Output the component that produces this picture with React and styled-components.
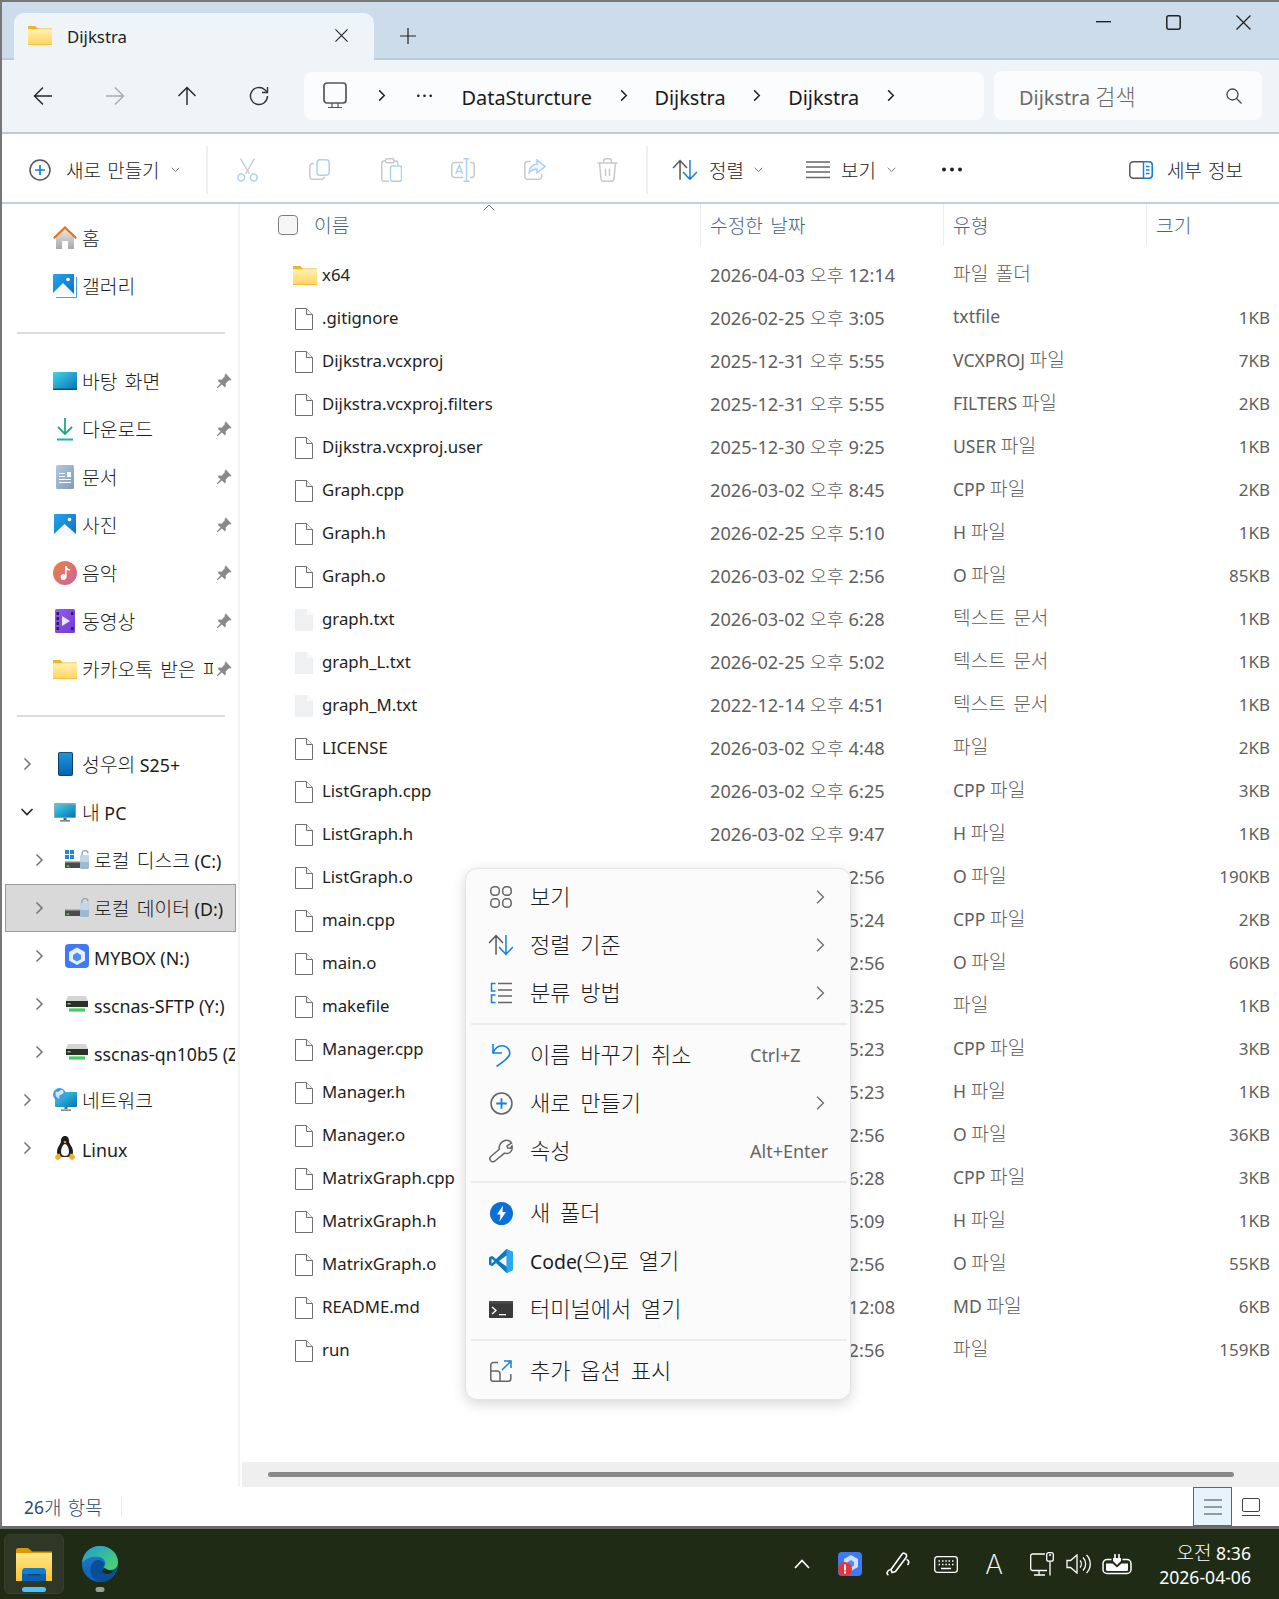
import React from "react"
import styled, { createGlobalStyle } from "styled-components"

const GlobalStyle = createGlobalStyle`
  html, body { margin: 0; padding: 0; background: #fff; }
  body {
    font-family: "Noto Sans", "Noto Sans CJK KR", sans-serif;
    color: #1c1c1c;
  }
  * { box-sizing: border-box; }
  svg { display: block; flex-shrink: 0; }
`

const Page = styled.div`
  position: relative;
  width: 1279px;
  height: 1599px;
  display: flex;
  flex-direction: column;
  overflow: hidden;
`

const Window = styled.div`
  flex: 1;
  min-height: 0;
  display: flex;
  flex-direction: column;
  border-top: 2px solid #777;
  border-left: 2px solid #777;
  border-bottom: 3px solid #6b6b6b;
  background: #fff;
`

const KoText = styled.span`
  font-family: "Noto Sans CJK KR", sans-serif;
  font-size: var(--ko-size, 19px);
  word-spacing: var(--ko-space, 2px);
  font-weight: 300;
`

// wraps hangul runs so they get their own size, latin is much smaller in the shot
function T({ children }) {
  const parts = String(children).split(/([\u3131-\uD7A3]+(?:\s+[\u3131-\uD7A3]+)*)/)
  return parts.map((p, i) =>
    /[\u3131-\uD7A3]/.test(p) ? <KoText key={i}>{p}</KoText> : p
  )
}

/* title bar */
const TabStrip = styled.div`
  height: 58px;
  flex-shrink: 0;
  display: flex;
  align-items: flex-end;
  padding-left: 12px;
  background: #ccdcea;
  border-bottom: 2px solid #bccbda;
`
const Tab = styled.div`
  width: 360px;
  height: 47px;
  margin-bottom: -2px;
  display: flex;
  align-items: center;
  padding: 0 26px 2px 14px;
  background: #eff4f9;
  border-radius: 10px 10px 0 0;
  font-size: 16.8px;
`
const TabLabel = styled.span`
  margin-left: 15px;
  padding-top: 2px;
  flex: 1;
`
const NewTab = styled.div`
  margin: 0 0 14px 26px;
`
const WindowControls = styled.div`
  margin-left: auto;
  margin-right: 1px;
  align-self: flex-start;
  display: flex;
`
const WindowButton = styled.div`
  width: 70px;
  height: 40px;
  display: flex;
  align-items: center;
  justify-content: center;
`

/* nav row */
const NavBar = styled.div`
  height: 74px;
  flex-shrink: 0;
  display: flex;
  align-items: center;
  padding: 0 0 1px 5px;
  background: #eff4f9;
  border-bottom: 2px solid #bccbda;
`
const NavButton = styled.div`
  width: 72px;
  display: flex;
  justify-content: center;
`
const AddressBox = styled.div`
  width: 680px;
  height: 48px;
  margin-left: 9px;
  display: flex;
  align-items: center;
  gap: 24.8px;
  padding-left: 19px;
  background: #fbfcfe;
  border-radius: 8px;
  font-size: 19.9px;
  color: #1a1a1a;
`
const AddressPart = styled.span`
  padding-top: 3px;
`
const AddressHome = styled.div`
  margin-right: 3.2px;
`
const Dots = styled.div`
  width: 24px;
  display: flex;
  justify-content: center;
`
const SearchBox = styled.div`
  width: 268px;
  height: 49px;
  margin-left: 10px;
  display: flex;
  align-items: center;
  justify-content: space-between;
  padding: 0 20px 0 25px;
  background: #fbfcfe;
  border-radius: 8px;
  font-size: 19.9px;
  color: #6b6b6b;
  --ko-size: 22px;
  --ko-space: 3px;
`
const SearchText = styled.span`
  padding-bottom: 2px;
`

/* command bar */
const CommandBar = styled.div`
  height: 70px;
  flex-shrink: 0;
  display: flex;
  align-items: center;
  padding: 3px 0 0 27px;
  background: #fff;
  border-bottom: 2px solid #c0cfdc;
  font-size: 17px;
  color: #222;
`
const CommandGroup = styled.div`
  width: ${(p) => p.$width}px;
  display: flex;
  align-items: center;
`
const CommandIcon = styled.div`
  width: 72px;
  display: flex;
  justify-content: center;
`
const CommandDivider = styled.div`
  width: 2px;
  height: 48px;
  background: #efefef;
  margin: ${(p) => p.$margin};
`
const Caret = styled.span`
  margin-left: ${(p) => p.$gap || 10}px;
`
const CommandLabel = styled.span`
  margin-left: ${(p) => p.$gap}px;
  white-space: nowrap;
`
const DetailsToggle = styled.div`
  margin-left: auto;
  padding-right: 36px;
  display: flex;
  align-items: center;
`

/* main area */
const Body = styled.div`
  flex: 1;
  min-height: 0;
  display: flex;
`
const Sidebar = styled.nav`
  width: 238px;
  flex-shrink: 0;
  padding-top: 10px;
  border-right: 2px solid #f3f3f3;
  overflow: hidden;
`
const NavItem = styled.div`
  height: 48px;
  margin: 0 2px 0 3px;
  display: flex;
  align-items: center;
  padding: 0 ${(p) => (p.$pin ? 3 : 0)}px 0 ${(p) => p.$level * 12 + 12}px;
  font-size: 17.8px;
  --ko-size: 19.3px;
  --ko-space: 3px;
  background: ${(p) => (p.$selected ? "#d9d9d9" : "transparent")};
  border: 1px solid ${(p) => (p.$selected ? "#9a9a9a" : "transparent")};
`
const Expander = styled.div`
  width: 18px;
  flex-shrink: 0;
  display: flex;
  justify-content: center;
  margin-right: 17px;
`
const NavIconSlot = styled.div`
  width: 24px;
  flex-shrink: 0;
  display: flex;
  justify-content: center;
`
const NavLabel = styled.span`
  flex: 1;
  min-width: 0;
  margin-left: 5px;
  padding-top: ${(p) => (p.$latin ? 4 : 0)}px;
  white-space: nowrap;
  overflow: hidden;
`
const Pin = styled.div`
  width: 16px;
  margin-left: 3px;
  flex-shrink: 0;
`
const SidebarRule = styled.div`
  height: 47px;
  display: flex;
  align-items: center;
  padding: 0 13px 2px 15px;
  &::after {
    content: "";
    flex: 1;
    height: 2px;
    background: #dcdcdc;
  }
`

const Content = styled.main`
  flex: 1;
  min-width: 0;
  display: flex;
  flex-direction: column;
`
const HeaderRow = styled.div`
  display: grid;
  grid-template-columns: 460px 243px 203px 1fr;
  height: 42px;
  margin-bottom: 8px;
  flex-shrink: 0;
  color: #4a6484;
  --ko-size: 19.2px;
  --ko-space: 3px;
`
const HeaderCell = styled.div`
  position: relative;
  display: flex;
  align-items: center;
  padding: 0 0 1px ${(p) => p.$pad}px;
  border-left: ${(p) => (p.$first ? "0" : "1px solid #e9edf1")};
`
const Checkbox = styled.div`
  width: 20px;
  height: 20px;
  margin: 1px 16px 0 0;
  background: #f6f6f6;
  border: 1px solid #7f7f7f;
  border-radius: 4px;
`
const SortCaret = styled.div`
  position: absolute;
  left: 243px;
  top: 0;
`
const Rows = styled.div`
  flex: 1;
  min-height: 0;
`
const FileRow = styled.div`
  display: grid;
  grid-template-columns: 460px 243px 203px 1fr;
  height: 43px;
  align-items: center;
  white-space: nowrap;
`
const NameCell = styled.div`
  display: flex;
  align-items: center;
  padding-left: 53px;
  font-size: 16.8px;
  color: #1e1e1e;
`
const FileName = styled.span`
  margin-top: -2px;
`
const FileIconSlot = styled.div`
  width: 29px;
  display: flex;
  padding-left: ${(p) => (p.$folder ? 0 : 2)}px;
`
const MetaCell = styled.div`
  padding: 0 0 ${(p) => p.$lift}px 10px;
  font-size: ${(p) => p.$size}px;
  color: #5f5f5f;
  --ko-size: ${(p) => p.$ko}px;
  --ko-space: 3px;
`
const SizeCell = styled.div`
  text-align: right;
  padding: 0 9px 2px 0;
  font-size: 17px;
  color: #5f5f5f;
`
const ScrollTrack = styled.div`
  height: 25px;
  flex-shrink: 0;
  margin-left: 2px;
  display: flex;
  align-items: center;
  padding: 0 45px 0 26px;
  background: #efefef;
`
const ScrollThumb = styled.div`
  flex: 1;
  height: 5px;
  border-radius: 3px;
  background: #888;
`
const StatusBar = styled.div`
  height: 39px;
  flex-shrink: 0;
  display: flex;
  align-items: center;
  padding-left: 22px;
  color: #2b4a6f;
  font-size: 17.4px;
`
const StatusDivider = styled.div`
  width: 1px;
  height: 21px;
  margin-left: 18px;
  background: #e9e9e9;
`
const ViewButton = styled.div`
  width: ${(p) => (p.$active ? 39 : 38)}px;
  height: 39px;
  display: flex;
  align-items: center;
  justify-content: center;
  background: ${(p) => (p.$active ? "#e5f3fb" : "transparent")};
  border: 1px solid ${(p) => (p.$active ? "#1878c8" : "transparent")};
`
const ViewButtons = styled.div`
  margin-left: auto;
  padding-right: 9px;
  display: flex;
`

/* context menu */
const Menu = styled.div`
  position: absolute;
  left: 465px;
  top: 868px;
  width: 386px;
  padding: 4px 0;
  background: #fbfbfb;
  border: 1px solid #e4e4e4;
  border-radius: 12px;
  box-shadow: 0 4px 14px rgba(0, 0, 0, 0.16);
  font-size: 19.4px;
  color: #1c1c1c;
  --ko-size: 22px;
  --ko-space: 5px;
`
const MenuItem = styled.div`
  height: 48px;
  display: flex;
  align-items: center;
  white-space: nowrap;
  padding-left: 19px;
`
const MenuIcon = styled.div`
  width: 32px;
  margin-right: 13px;
  display: flex;
  justify-content: center;
`
const MenuLabel = styled.span`
  padding-bottom: 4px;
`
const MenuChevron = styled.div`
  margin-left: auto;
  margin-right: 22px;
`
const Shortcut = styled.div`
  margin-left: auto;
  margin-right: 21px;
  width: 79px;
  font-size: 18px;
  color: #666;
`
const MenuRule = styled.div`
  height: 2px;
  margin: 6px 3px 6px 5px;
  background: #ececec;
`

/* taskbar */
const Taskbar = styled.footer`
  height: 70px;
  flex-shrink: 0;
  display: flex;
  padding-left: 4px;
  background: #202b16;
  color: #fff;
`
const TaskButton = styled.div`
  position: relative;
  width: 60px;
  height: 60px;
  margin: 5px 6px 0 0;
  display: flex;
  justify-content: center;
  padding-top: ${(p) => p.$top}px;
  border-radius: 6px;
  background: ${(p) => (p.$active ? "#2f3827" : "transparent")};
  border: 1px solid ${(p) => (p.$active ? "#363f2e" : "transparent")};
`
const TaskIndicator = styled.div`
  position: absolute;
  bottom: 1px;
  left: 50%;
  transform: translateX(-50%);
  width: ${(p) => (p.$active ? 24 : 9)}px;
  height: 5px;
  border-radius: 3px;
  background: ${(p) => (p.$active ? "#4cc2ff" : "#9a9e96")};
`
const Tray = styled.div`
  margin-left: auto;
  display: flex;
  align-items: center;
`
const TraySlot = styled.div`
  width: ${(p) => p.$width}px;
  padding-left: ${(p) => p.$nudge || 0}px;
  display: flex;
  justify-content: center;
`
const Clock = styled.div`
  margin: 0 28px 0 18px;
  width: 95px;
  text-align: right;
  font-size: 17.6px;
  line-height: 24px;
  --ko-size: 19px;
  white-space: nowrap;
`
const TrayLetter = styled.span`
  font-family: Inter, "Liberation Sans", sans-serif;
  font-size: 27px;
  font-weight: 200;
  line-height: 1;
`

/* ---------- drawings ---------- */
const Chevron = ({ size = 14, color = "#222", w = 1.6 }) => (
  <svg width={size} height={size} viewBox="0 0 14 14" fill="none" stroke={color} strokeWidth={w}>
    <path d="M4.5 1.5 10 7l-5.5 5.5" />
  </svg>
)
const ChevronDown = ({ color = "#222", w = 1.6 }) => (
  <svg width="16" height="16" viewBox="0 0 16 16" fill="none" stroke={color} strokeWidth={w}>
    <path d="M2.5 5 8 10.5 13.5 5" />
  </svg>
)
const SmallCaret = () => (
  <svg width="9" height="6" viewBox="0 0 9 6" fill="none" stroke="#777" strokeWidth="1">
    <path d="M.7.8 4.5 4.6 8.3.8" />
  </svg>
)
const Folder = ({ w = 24, h = 19 }) => (
  <svg width={w} height={h} viewBox="0 0 24 19">
    <defs>
      <linearGradient id="fg" x1="0" y1="0" x2="0" y2="1">
        <stop offset="0" stopColor="#fff2b0" />
        <stop offset="1" stopColor="#ffd35f" />
      </linearGradient>
    </defs>
    <path d="M0 1.2C0 .5.5 0 1.2 0h6l2.6 2.4H24v3H0z" fill="#f0b429" />
    <path d="M0 3.2h24V19H0z" fill="url(#fg)" />
    <path d="M0 18.4h24V19H0z" fill="#eeb32f" />
  </svg>
)
const FileIcon = () => (
  <svg width="18" height="22" viewBox="0 0 18 22" fill="#fff" stroke="#6f6f6f" strokeWidth="1">
    <path d="M.5.5h11L17.5 6.5v15H.5z" />
    <path d="M11.5.5v6h6" fill="#f3f3f3" />
  </svg>
)
const TextFileIcon = () => (
  <svg width="18" height="22" viewBox="0 0 18 22">
    <path d="M0 0h12l6 6v16H0z" fill="#eef0f2" />
    <path d="M12 0v6h6z" fill="#f9f9f9" />
  </svg>
)
const Pinned = () => (
  <svg width="16" height="16" viewBox="0 0 16 16" fill="#8a8a8a">
    <path d="M9.6.6 15.4 6.4 14 7.4l-1-.2-3.3 3.3.2 2.6-1.2 1.2-2.9-2.9-4.2 3.8-.8-.8 3.8-4.2L1.7 7.7l1.2-1.2 2.6.2 3.3-3.3-.2-1z" />
  </svg>
)
const Home = () => (
  <svg width="24" height="24" viewBox="0 0 24 24">
    <defs>
      <linearGradient id="hb" x1="0" y1="0" x2="0" y2="1">
        <stop offset="0" stopColor="#e6e6e6" />
        <stop offset="1" stopColor="#a9a9a9" />
      </linearGradient>
    </defs>
    <path d="M3 10 12 3l9 7v13h-6v-8H9v8H3z" fill="url(#hb)" />
    <path d="M0 11.5 12 0l12 11.5-1.5 1.5L12 3 1.5 13z" fill="#e8701a" />
  </svg>
)
const Gallery = () => (
  <svg width="24" height="24" viewBox="0 0 24 24">
    <defs>
      <linearGradient id="gb" x1="0" y1="0" x2="1" y2="1">
        <stop offset="0" stopColor="#26a5ea" />
        <stop offset="1" stopColor="#0b6fc4" />
      </linearGradient>
    </defs>
    <path d="M3 23h20V3h1v21H3z" fill="#4f9ed8" />
    <path d="M1 0h20v21H1a1 1 0 0 1-1-1V1a1 1 0 0 1 1-1z" fill="url(#gb)" />
    <path d="M0 19 10 9l11 11v1H0z" fill="#f4f8fc" />
    <circle cx="15" cy="5.5" r="1.8" fill="#fff" />
  </svg>
)
const Desktop = () => (
  <svg width="24" height="18" viewBox="0 0 24 18">
    <defs>
      <linearGradient id="db" x1="0" y1="0" x2="1" y2="1">
        <stop offset="0" stopColor="#3ed6e6" />
        <stop offset="1" stopColor="#0a6fb8" />
      </linearGradient>
    </defs>
    <rect width="24" height="18" rx="1" fill="url(#db)" />
    <rect y="16.6" width="24" height="1.4" fill="#0a4f86" />
  </svg>
)
const Download = () => (
  <svg width="18" height="24" viewBox="0 0 18 24" fill="none" stroke="#1ea982" strokeWidth="1.8">
    <path d="M9 1v16M2 10l7 7 7-7" />
    <path d="M1 22.5h16" stroke="#1db5a0" strokeWidth="2" />
  </svg>
)
const Documents = () => (
  <svg width="18" height="24" viewBox="0 0 18 24">
    <defs>
      <linearGradient id="dc" x1="0" y1="0" x2="1" y2="1">
        <stop offset="0" stopColor="#b6c8dc" />
        <stop offset="1" stopColor="#7c9cc0" />
      </linearGradient>
    </defs>
    <rect width="18" height="24" rx="1.5" fill="url(#dc)" />
    <path d="M3 8h6v1H3zM3 11h6v1H3zM3 14h12v1H3zM3 17h12v1H3z" fill="#fff" />
    <rect x="11" y="7" width="4" height="5" fill="#fff" />
  </svg>
)
const Pictures = () => (
  <svg width="22" height="22" viewBox="0 0 22 22">
    <rect width="22" height="22" rx="1" fill="url(#gb)" />
    <path d="M0 20 10.5 10 22 20v2H0z" fill="#f4f8fc" />
    <circle cx="15.5" cy="5.5" r="1.8" fill="#fff" />
  </svg>
)
const Music = () => (
  <svg width="24" height="24" viewBox="0 0 24 24">
    <defs>
      <linearGradient id="mu" x1="0" y1="0" x2="1" y2="1">
        <stop offset="0" stopColor="#f0823c" />
        <stop offset="1" stopColor="#c265a6" />
      </linearGradient>
    </defs>
    <circle cx="12" cy="12" r="12" fill="url(#mu)" />
    <path d="M12 5h1.6c.3 2 1.6 3 3.4 3.2v1.6c-1.6 0-2.8-.5-3.4-1.2V16a3 3 0 1 1-1.6-2.6z" fill="#fff" />
  </svg>
)
const Video = () => (
  <svg width="20" height="24" viewBox="0 0 20 24">
    <defs>
      <linearGradient id="vi" x1="0" y1="0" x2="1" y2="1">
        <stop offset="0" stopColor="#9a5af0" />
        <stop offset="1" stopColor="#6f3ad0" />
      </linearGradient>
    </defs>
    <rect width="20" height="24" rx="1.5" fill="url(#vi)" />
    <path d="M7 7 15 12 7 17z" fill="#e4e8fb" />
    <path d="M1.5 3h2.5v3H1.5zM1.5 8h2.5v3H1.5zM1.5 13h2.5v3H1.5zM1.5 18h2.5v3H1.5zM16 3h2.5v3H16zM16 18h2.5v3H16z" fill="#2e1a70" />
  </svg>
)
const Phone = () => (
  <svg width="15" height="24" viewBox="0 0 15 24">
    <defs>
      <linearGradient id="ph" x1="0" y1="0" x2="0" y2="1">
        <stop offset="0" stopColor="#1b95df" />
        <stop offset="1" stopColor="#0565b2" />
      </linearGradient>
    </defs>
    <rect width="15" height="24" rx="2" fill="#123a5a" />
    <rect x="1" y=".8" width="13" height="22.4" rx="1.4" fill="url(#ph)" />
  </svg>
)
const Monitor = () => (
  <svg width="22" height="19" viewBox="0 0 22 19">
    <rect width="22" height="15" rx="1" fill="#9aa4ad" />
    <rect x=".8" y="1.6" width="20.4" height="12.6" fill="url(#db)" />
    <path d="M9.5 15h3v2h-3zM6 17.3h10v1.3H6z" fill="#55606a" />
  </svg>
)
const Drive = ({ win }) => (
  <svg width="24" height="20" viewBox="0 0 24 20">
    {win && <path d="M0 0h4v4H0zM5 0h4v4H5zM0 5h4v4H0zM5 5h4v4H5z" fill="#1e88dc" />}
    <path d="M1 11h15v7H0v-6z" fill="#4a4a4a" />
    <path d="M1 11h15v1.5H0z" fill="#b5b5b5" />
    <rect x="1.6" y="15.4" width="2.6" height="1.4" fill="#52e052" />
    <path d="M17 5V3.5a3 3 0 0 1 6 0" fill="none" stroke="#a0a6ac" strokeWidth="1.4" />
    <rect x="15" y="5" width="9" height="14" rx="1.5" fill="#9db9cf" />
    <rect x="15" y="5" width="9" height="7" rx="1.5" fill="#c2d6e6" />
  </svg>
)
const Mybox = ({ size = 24 }) => (
  <svg width={size} height={size} viewBox="0 0 24 24">
    <rect width="24" height="24" rx="4" fill="#3f79f5" />
    <path d="M12 3.5 20 8v8.5L12 21l-8-4.5V8z" fill="#e8f0ff" />
    <path d="M12 8.5 16 11v4.2L12 17.6l-4-2.4V11z" fill="#4f8cf5" />
  </svg>
)
const Nas = () => (
  <svg width="22" height="16" viewBox="0 0 22 16">
    <path d="M2 0h18l2 5v5H0V5z" fill="#d4d4d4" />
    <rect y="5" width="22" height="6" fill="#2e2e2e" />
    <rect x="1.5" y="7" width="3" height="1.5" fill="#54e054" />
    <rect y="11" width="22" height="2.5" fill="#f2f2f2" />
    <rect x="3" y="12.4" width="16" height="3.2" fill="#3ed05a" />
  </svg>
)
const Network = () => (
  <svg width="24" height="24" viewBox="0 0 24 24">
    <rect x="2" y="4" width="22" height="15" rx="1" fill="url(#db)" />
    <path d="M11.5 19h3v2h-3zM8 21.4h10v1.4H8z" fill="#5e6a74" />
    <circle cx="6.5" cy="6.5" r="6.5" fill="#3f9ee0" />
    <path d="M3 3.5c2 1 3 .2 4-1s3-.8 3.5 1-1 3-2.5 3.2-2.4 1.5-1.5 4.2C3.5 10 1.5 7 3 3.5z" fill="#cfe7f8" />
  </svg>
)
const Penguin = () => (
  <svg width="20" height="24" viewBox="0 0 20 24">
    <path d="M10 0c3 0 4 2.4 4 5 0 3 4 6 4 11 0 3-2 5-8 5s-8-2-8-5c0-5 4-8 4-11 0-2.6 1-5 4-5z" fill="#1d1d1d" />
    <path d="M10 8c2 0 4 4 4 8 0 3-2 4-4 4s-4-1-4-4c0-4 2-8 4-8z" fill="#f8f8f8" />
    <path d="M8.5 6 10 4.8 11.5 6 10 7.5z" fill="#f0b020" />
    <path d="M0 21c1-3 3-4 5-3l1 4-3 2c-1 0-3-1-3-3zM20 21c-1-3-3-4-5-3l-1 4 3 2c1 0 3-1 3-3z" fill="#f0b020" />
  </svg>
)

const Disabled = { stroke: "#c9c9c9", accent: "#a9d2f5" }
const IconCut = () => (
  <svg width="21" height="24" viewBox="0 0 21 24" fill="none" stroke={Disabled.stroke} strokeWidth="1.400">
    <path d="M3.500 0.500 12.500 16M17.500 0.500 8.500 16" />
    <circle cx="4.200" cy="19.500" r="3.400" stroke={Disabled.accent} strokeWidth="1.500" />
    <circle cx="16.800" cy="19.500" r="3.400" stroke={Disabled.accent} strokeWidth="1.500" />
  </svg>
)
const IconCopy = () => (
  <svg width="21" height="21" viewBox="0 0 21 21" fill="none" strokeWidth="1.500">
    <path d="M5 4.500H3.500A2.700 2.700 0 0 0 .8 7.200v10.300A2.700 2.700 0 0 0 3.500 20.200h9.300a2.700 2.700 0 0 0 2.700-2.700" stroke={Disabled.stroke} />
    <rect x="8" y=".8" width="12.200" height="15.400" rx="3" stroke={Disabled.accent} />
  </svg>
)
const IconPaste = () => (
  <svg width="21" height="24" viewBox="0 0 21 24" fill="none" strokeWidth="1.500">
    <path d="M5 3H3A2.200 2.200 0 0 0 .8 5.200v16A2.200 2.200 0 0 0 3 23.300h5M13 3h1.500c1.300 0 2.300 1 2.300 2.300V7" stroke={Disabled.stroke} />
    <rect x="4.500" y=".8" width="8.500" height="4" rx="1.600" stroke={Disabled.stroke} />
    <rect x="9.500" y="8" width="11" height="15.300" rx="2" stroke={Disabled.accent} />
  </svg>
)
const IconRename = () => (
  <svg width="24" height="24" viewBox="0 0 24 24" fill="none" strokeWidth="1.500">
    <path d="M12 4.500H3.500A2.700 2.700 0 0 0 .8 7.200v9.600a2.700 2.700 0 0 0 2.700 2.700H12M19 4.500h1.500a2.700 2.700 0 0 1 2.700 2.700v9.600a2.700 2.700 0 0 1-2.700 2.700H19" stroke={Disabled.stroke} />
    <path d="M12.500.8h6M15.500.8v22.400M12.500 23.200h6" stroke={Disabled.accent} />
    <path d="M4.800 16 8.300 7.500 11.800 16M6 13.500h4.600" stroke={Disabled.accent} />
  </svg>
)
const IconShare = () => (
  <svg width="22" height="21" viewBox="0 0 22 21" fill="none" strokeWidth="1.500">
    <path d="M7 2.500H3.500A2.700 2.700 0 0 0 .8 5.200v12.300A2.700 2.700 0 0 0 3.500 20.200H15a2.700 2.700 0 0 0 2.700-2.700V15" stroke={Disabled.stroke} />
    <path d="M13 .8 21 7.500l-8 6.500v-3.700c-3.800-.2-6.300 1-8 4 .3-5.800 3-8.800 8-9.300z" stroke={Disabled.accent} fill="#eef6fc" />
  </svg>
)
const IconTrash = () => (
  <svg width="21" height="24" viewBox="0 0 21 24" fill="none" stroke={Disabled.stroke} strokeWidth="1.500">
    <path d="M.5 5h20M6.500 5V3.500c0-1.500 1-2.700 2.500-2.700h3c1.500 0 2.500 1.200 2.500 2.700V5M2.500 5l1.500 16c.1 1.400 1 2.300 2.400 2.300h8.200c1.400 0 2.300-.9 2.400-2.300L18.500 5M8.500 10.500v7.500M12.500 10.500v7.500" />
  </svg>
)
const IconSort = ({ w = 26 }) => (
  <svg width={w} height={w * 0.84} viewBox="0 0 26 22" fill="none" strokeWidth="1.5">
    <path d="M8 21V2M1 9l7-7.500L15 9" stroke="#555" />
    <path d="M18 1v19M11 13l7 7.500L25 13" stroke="#1183d8" />
  </svg>
)
const IconLines = () => (
  <svg width="26" height="18" viewBox="0 0 26 18" fill="none" stroke="#666" strokeWidth="1.300">
    <path d="M1 1h24M1 6h24M1 11h24M1 16.500h24" />
  </svg>
)
const IconDetails = () => (
  <svg width="24" height="18" viewBox="0 0 24 18" fill="none" strokeWidth="1.500">
    <rect x=".8" y=".8" width="22.400" height="16.400" rx="3.500" stroke="#555" />
    <path d="M14.500.8H20c1.800 0 3.200 1.400 3.200 3.200v10c0 1.800-1.400 3.200-3.200 3.200h-5.500z" stroke="#1183d8" fill="#fff" />
    <path d="M17 5.500h3.500M17 9h3.500M17 12.500h3.500" stroke="#1183d8" />
  </svg>
)
const IconPlusCircle = ({ size = 22, blue = "#1183d8", ring = "#555" }) => (
  <svg width={size} height={size} viewBox="0 0 22 22" fill="none" strokeWidth="1.500">
    <circle cx="11" cy="11" r="10" stroke={ring} />
    <path d="M11 6v10M6 11h10" stroke={blue} strokeWidth="1.700" />
  </svg>
)
const MenuGrid = () => (
  <svg width="22" height="22" viewBox="0 0 22 22" fill="none" stroke="#666" strokeWidth="1.500">
    <rect x=".8" y=".8" width="8.500" height="8.500" rx="3.500" />
    <rect x="12.700" y=".8" width="8.500" height="8.500" rx="3.500" />
    <rect x=".8" y="12.700" width="8.500" height="8.500" rx="3.500" />
    <rect x="12.700" y="12.700" width="8.500" height="8.500" rx="3.500" />
  </svg>
)
const MenuGroup = () => (
  <svg width="22" height="22" viewBox="0 0 22 22" fill="none" strokeWidth="1.500">
    <path d="M5.500 1.500H1.500v7.500h4M5.500 13H1.500v7.500h4" stroke="#1183d8" />
    <path d="M8 1.500h14M8 8h14M8 14h14M8 20.500h14" stroke="#666" />
  </svg>
)
const MenuUndo = () => (
  <svg width="22" height="24" viewBox="0 0 22 24" fill="none" stroke="#1183d8" strokeWidth="1.600">
    <path d="M3 1v9h9" />
    <path d="M3 10c2-5 6-8 11-7 4 .8 6.500 5 5.500 8.500-.5 2.500-4 6-13 12" />
  </svg>
)
const MenuWrench = () => (
  <svg width="24" height="24" viewBox="0 0 24 24" fill="none" stroke="#666" strokeWidth="1.500">
    <path d="M15.500 1.500c3-.8 5.500.3 7 2.500l-4.500 3 .8 2 2.500.3 1.700-2.300c.8 3.500-1 7-4.800 7.500-1 .1-1.700 0-2.700-.4L6.500 21.500c-1.500 1.500-3.500 1.500-4.800.2-1.200-1.300-1-3.200.4-4.500l8.200-7c-.7-3.800 1.700-7.600 5.700-8.700z" />
  </svg>
)
const MenuBolt = () => (
  <svg width="23" height="23" viewBox="0 0 23 23">
    <circle cx="11.500" cy="11.500" r="11.500" fill="#0a70d6" />
    <path d="M13 3.500 7 12.500h3.500L9.500 19.500l6.500-9.500h-3.500z" fill="#fff" />
  </svg>
)
const MenuVSCode = () => (
  <svg width="24" height="24" viewBox="0 0 24 24">
    <path d="M17.500 0 24 3v18l-6.500 3L7 14l-4 3.300L0 15.500V8.500L3 6.700 7 10z" fill="#0b7ac4" />
    <path d="M17.500 0 24 3v18l-6.500 3z" fill="#2ba7ee" />
    <path d="M17.500 6.500v11L10 12z" fill="#fbfbfb" />
    <path d="M2.500 9.500 5.500 12l-3 2.500z" fill="#fbfbfb" />
  </svg>
)
const MenuTerminal = () => (
  <svg width="24" height="17" viewBox="0 0 24 17">
    <rect width="24" height="17" rx="1" fill="#3a3a3a" />
    <rect width="24" height="2.500" fill="#4c4c4c" />
    <path d="M3 6l4 3.500L3 13" fill="none" stroke="#fff" strokeWidth="1.400" />
    <path d="M10 13h7v1.300h-7z" fill="#fff" />
  </svg>
)
const MenuMore = () => (
  <svg width="22" height="22" viewBox="0 0 22 22" fill="none" strokeWidth="1.500">
    <path d="M8 2.500H3.500A2.700 2.700 0 0 0 .8 5.200v13.500a2.500 2.500 0 0 0 2.500 2.500h15a2.500 2.500 0 0 0 2.500-2.500V14M1 11h6a3 3 0 0 1 3 3v7" stroke="#666" />
    <path d="M14 1h7v7M21 1l-9 9" stroke="#1183d8" />
  </svg>
)
const NavArrow = ({ rotate = 0, color = "#222" }) => (
  <svg width="20" height="20" viewBox="0 0 20 20" fill="none" stroke={color} strokeWidth="1.400" style={rotate ? { transform: `rotate(${rotate}deg)` } : undefined}>
    <path d="M19 10H1.500M10 1.500 1.500 10l8.500 8.500" />
  </svg>
)
const Refresh = () => (
  <svg width="20" height="20" viewBox="0 0 20 20" fill="none" stroke="#333" strokeWidth="1.400">
    <path d="M18.500 10a8.500 8.500 0 1 1-2.700-6.200L18.500 6.500" />
    <path d="M18.500 1v5.500H13" />
  </svg>
)
const MonitorOutline = () => (
  <svg width="24" height="27" viewBox="0 0 24 27" fill="none" stroke="#555" strokeWidth="1.700">
    <rect x="1" y="1" width="22" height="20" rx="3" />
    <path d="M9 21v4M15 21v4M5 25.500h14" strokeWidth="1.200" />
  </svg>
)
const TripleDot = ({ gap = 6, r = 1.300, color = "#222" }) => (
  <svg width={r * 6 + gap * 2} height={r * 2 + 1} viewBox={`0 0 ${r * 6 + gap * 2} ${r * 2 + 1}`} fill={color}>
    <circle cx={r} cy={r + 0.5} r={r} />
    <circle cx={r * 3 + gap} cy={r + 0.5} r={r} />
    <circle cx={r * 5 + gap * 2} cy={r + 0.5} r={r} />
  </svg>
)
const Search = () => (
  <svg width="16" height="16" viewBox="0 0 16 16" fill="none" stroke="#444" strokeWidth="1.300">
    <circle cx="6.500" cy="6.500" r="5.500" />
    <path d="M10.500 10.500 15.500 15.500" />
  </svg>
)
const Cross = ({ size = 14 }) => (
  <svg width={size} height={size} viewBox="0 0 14 14" fill="none" stroke="#222" strokeWidth="1.200">
    <path d="M.5.5l13 13M13.500.5l-13 13" />
  </svg>
)
const ExplorerIcon = () => (
  <svg width="36" height="33" viewBox="0 0 36 33">
    <defs>
      <linearGradient id="xf" x1="0" y1="0" x2="0" y2="1">
        <stop offset="0" stopColor="#ffe98a" />
        <stop offset="1" stopColor="#ffc22e" />
      </linearGradient>
    </defs>
    <path d="M0 2c0-1 1-2 2-2h9c1 0 2 .6 3 1.500L16 3.500h20V8H0z" fill="#d99a00" />
    <path d="M0 5h36v28H0z" fill="url(#xf)" />
    <path d="M6 33v-10c0-1.500 1-3 3-3h18c2 0 3 1.500 3 3v10z" fill="#0f7fd1" />
    <path d="M6 33v-7h24v7z" fill="#0a62ad" />
    <path d="M12 26h12v1.200H12z" fill="#053a6a" />
  </svg>
)
const EdgeIcon = () => (
  <svg width="36" height="36" viewBox="0 0 36 36">
    <defs>
      <linearGradient id="e1" x1="0" y1="0" x2="1" y2="1">
        <stop offset="0" stopColor="#1f9bd8" />
        <stop offset="1" stopColor="#4fd960" />
      </linearGradient>
      <linearGradient id="e2" x1="0" y1="0" x2="0" y2="1">
        <stop offset="0" stopColor="#1f7fd6" />
        <stop offset="1" stopColor="#0f5fb0" />
      </linearGradient>
    </defs>
    <circle cx="18" cy="18" r="18" fill="url(#e2)" />
    <path d="M0 17C1 7 8 0 18 0c10 0 18 7 18 16 0 5-3.500 8-8 8-3 0-5.500-1.500-6-3 3-3 1-9-5-10-6-1-12 0-17 6z" fill="url(#e1)" />
    <path d="M13 33c-5-3-6-10-3-15 1-2 3-3.500 5-4 3.500-.5 6 1 7 3 .6 1.300 0 2.500-1 3.500.2 3 3.500 5 7 4.500 3.500-.4 6-2 7-4-1 7-6 15-16 15-2.500 0-4.500-1-6-3z" fill="#0a4f96" />
    <path d="M23 22c2 2 5 3 9 2-1 2-4 4-7 4-2.500 0-4-1-5-3 .8-1 2-2 3-3z" fill="#202b16" />
  </svg>
)
const TrayCaret = () => (
  <svg width="16" height="10" viewBox="0 0 16 10" fill="none" stroke="#fff" strokeWidth="1.700">
    <path d="M1 9l7-7.500L15 9" />
  </svg>
)
const TrayMybox = () => (
  <svg width="24" height="24" viewBox="0 0 24 24">
    <rect width="24" height="24" rx="4" fill="#3f79f5" />
    <path d="M13 3 20 7v8l-7 4-7-4V7z" fill="#cfe0ff" />
    <path d="M13 8 16 10v3.500l-3 2-3-2V10z" fill="#4f8cf5" />
    <circle cx="7" cy="17" r="7" fill="#e8343a" />
    <path d="M6 12.500h2v6H6zM6 19.600h2v2H6z" fill="#fff" />
  </svg>
)
const TrayPen = () => (
  <svg width="24" height="24" viewBox="0 0 24 24" fill="none" stroke="#fff" strokeWidth="1.600">
    <path d="M16.500 1.500c1.500-.8 3.500 0 4 1.500.3 1 0 2-.6 2.800L9.500 19.500 6 20.500l-1-3z" />
    <path d="M20.500 7.500c2.500.6 3 3.500 1 5.500M4.500 17.500c-3.500 1-4.500 4.500-2 5.500" />
  </svg>
)
const TrayKeyboard = () => (
  <svg width="24" height="17" viewBox="0 0 24 17" fill="none" stroke="#fff" strokeWidth="1.300">
    <rect x=".7" y=".7" width="22.600" height="15.600" rx="2.500" />
    <path d="M4.500 5h1.500M8 5h1.500M11.300 5h1.500M14.500 5H16M18 5h1.500M4.500 8.500h1.500M8 8.500h1.500M11.300 8.500h1.500M14.500 8.500H16M18 8.500h1.500M7 12.500h10" strokeWidth="1.500" />
  </svg>
)
const TrayNet = () => (
  <svg width="24" height="24" viewBox="0 0 24 24" fill="none" stroke="#fff" strokeWidth="1.300">
    <path d="M15 2H2.500A1.800 1.800 0 0 0 .7 3.800v13c0 1 .8 1.700 1.800 1.700H17" />
    <path d="M9 18.500v4.500M4 23h11" />
    <rect x="16.700" y=".7" width="6.600" height="8.500" rx="2" />
    <path d="M20 9.200V23.500M19 3h2" />
  </svg>
)
const TrayVolume = () => (
  <svg width="25" height="20" viewBox="0 0 25 20" fill="none" stroke="#fff" strokeWidth="1.300">
    <path d="M1 6.500v7h3.500L11 19V1L4.500 6.500z" />
    <path d="M14 6.500c1.800 2 1.800 5 0 7M17 3.500c3.500 3.500 3.500 9.500 0 13M20.500 1c5 5 5 13 0 18" />
  </svg>
)
const TrayBattery = () => (
  <svg width="30" height="22" viewBox="0 0 30 22" fill="none" stroke="#fff" strokeWidth="1.500">
    <path d="M9.500 6.500H5a4 4 0 0 0-4 4v6a4 4 0 0 0 4 4h20a4 4 0 0 0 4-4v-6a4 4 0 0 0-4-4h-4.500" />
    <path d="M4 10.500h6.500l4.500 4 4.500-4H26v6a1.500 1.500 0 0 1-1.500 1.500h-19A1.500 1.500 0 0 1 4 16.500z" fill="#fff" stroke="none" />
    <path d="M11 5h8v3l-4 4-4-4z" fill="#fff" stroke="none" />
    <path d="M13 1v4M17 1v4" strokeWidth="1.600" />
  </svg>
)

/* ---------- data ---------- */
const quick = [
  ["바탕 화면", <Desktop />],
  ["다운로드", <Download />],
  ["문서", <Documents />],
  ["사진", <Pictures />],
  ["음악", <Music />],
  ["동영상", <Video />],
  ["카카오톡 받은 파일", <Folder />],
]

const drives = [
  { label: "성우의 S25+", icon: <Phone />, level: 0, open: false },
  { label: "내 PC", icon: <Monitor />, level: 0, open: true },
  { label: "로컬 디스크 (C:)", icon: <Drive win />, level: 1 },
  { label: "로컬 데이터 (D:)", icon: <Drive />, level: 1, selected: true },
  { label: "MYBOX (N:)", icon: <Mybox />, level: 1 },
  { label: "sscnas-SFTP (Y:)", icon: <Nas />, level: 1 },
  { label: "sscnas-qn10b5 (Z:)", icon: <Nas />, level: 1 },
  { label: "네트워크", icon: <Network />, level: 0 },
  { label: "Linux", icon: <Penguin />, level: 0 },
]

const files = [
  ["x64", "2026-04-03 오후 12:14", "파일 폴더", "", "folder"],
  [".gitignore", "2026-02-25 오후 3:05", "txtfile", "1KB"],
  ["Dijkstra.vcxproj", "2025-12-31 오후 5:55", "VCXPROJ 파일", "7KB"],
  ["Dijkstra.vcxproj.filters", "2025-12-31 오후 5:55", "FILTERS 파일", "2KB"],
  ["Dijkstra.vcxproj.user", "2025-12-30 오후 9:25", "USER 파일", "1KB"],
  ["Graph.cpp", "2026-03-02 오후 8:45", "CPP 파일", "2KB"],
  ["Graph.h", "2026-02-25 오후 5:10", "H 파일", "1KB"],
  ["Graph.o", "2026-03-02 오후 2:56", "O 파일", "85KB"],
  ["graph.txt", "2026-03-02 오후 6:28", "텍스트 문서", "1KB", "text"],
  ["graph_L.txt", "2026-02-25 오후 5:02", "텍스트 문서", "1KB", "text"],
  ["graph_M.txt", "2022-12-14 오후 4:51", "텍스트 문서", "1KB", "text"],
  ["LICENSE", "2026-03-02 오후 4:48", "파일", "2KB"],
  ["ListGraph.cpp", "2026-03-02 오후 6:25", "CPP 파일", "3KB"],
  ["ListGraph.h", "2026-03-02 오후 9:47", "H 파일", "1KB"],
  ["ListGraph.o", "2026-03-02 오후 2:56", "O 파일", "190KB"],
  ["main.cpp", "2026-03-02 오후 5:24", "CPP 파일", "2KB"],
  ["main.o", "2026-03-02 오후 2:56", "O 파일", "60KB"],
  ["makefile", "2026-03-02 오후 3:25", "파일", "1KB"],
  ["Manager.cpp", "2026-03-02 오후 5:23", "CPP 파일", "3KB"],
  ["Manager.h", "2026-03-02 오후 5:23", "H 파일", "1KB"],
  ["Manager.o", "2026-03-02 오후 2:56", "O 파일", "36KB"],
  ["MatrixGraph.cpp", "2026-03-02 오후 6:28", "CPP 파일", "3KB"],
  ["MatrixGraph.h", "2026-03-02 오후 5:09", "H 파일", "1KB"],
  ["MatrixGraph.o", "2026-03-02 오후 2:56", "O 파일", "55KB"],
  ["README.md", "2026-03-02 오후 12:08", "MD 파일", "6KB"],
  ["run", "2026-03-02 오후 2:56", "파일", "159KB"],
]

const menuGroups = [
  [
    { label: "보기", icon: <MenuGrid />, sub: true },
    { label: "정렬 기준", icon: <IconSort />, sub: true },
    { label: "분류 방법", icon: <MenuGroup />, sub: true },
  ],
  [
    { label: "이름 바꾸기 취소", icon: <MenuUndo />, key: "Ctrl+Z" },
    { label: "새로 만들기", icon: <IconPlusCircle size={23} ring="#666" />, sub: true },
    { label: "속성", icon: <MenuWrench />, key: "Alt+Enter" },
  ],
  [
    { label: "새 폴더", icon: <MenuBolt /> },
    { label: "Code(으)로 열기", icon: <MenuVSCode /> },
    { label: "터미널에서 열기", icon: <MenuTerminal /> },
  ],
  [{ label: "추가 옵션 표시", icon: <MenuMore /> }],
]

function SideRow({ label, icon, level = 0, open, selected, pin, bare }) {
  const latin = !/[\u3131-\uD7A3]/.test(label)
  return (
    <NavItem $level={level} $selected={selected} $pin={pin}>
      <Expander>
        {bare ? null : open ? <ChevronDown /> : <Chevron color="#777" />}
      </Expander>
      <NavIconSlot>{icon}</NavIconSlot>
      <NavLabel $latin={latin}><T>{label}</T></NavLabel>
      {pin && <Pin><Pinned /></Pin>}
    </NavItem>
  )
}

export default function App() {
  return (
    <Page>
      <GlobalStyle />
      <Window>
        <TabStrip>
          <Tab>
            <Folder />
            <TabLabel>Dijkstra</TabLabel>
            <Cross size={13} />
          </Tab>
          <NewTab>
            <svg width="16" height="16" viewBox="0 0 16 16" stroke="#222" strokeWidth="1.200">
              <path d="M8 0v16M0 8h16" />
            </svg>
          </NewTab>
          <WindowControls>
            <WindowButton>
              <svg width="15" height="2" viewBox="0 0 15 2"><path d="M0 0h15v1.400H0z" fill="#222" /></svg>
            </WindowButton>
            <WindowButton>
              <svg width="15" height="15" viewBox="0 0 15 15" fill="none" stroke="#222" strokeWidth="1.500">
                <rect x=".8" y=".8" width="13.400" height="13.400" rx="2" />
              </svg>
            </WindowButton>
            <WindowButton><Cross size={15} /></WindowButton>
          </WindowControls>
        </TabStrip>

        <NavBar>
          <NavButton><NavArrow /></NavButton>
          <NavButton><NavArrow rotate={180} color="#a9a9a9" /></NavButton>
          <NavButton><NavArrow rotate={90} /></NavButton>
          <NavButton><Refresh /></NavButton>
          <AddressBox>
            <AddressHome><MonitorOutline /></AddressHome>
            <Chevron size={13} w={1.6} />
            <Dots><TripleDot gap={3.6} r={1.3} /></Dots>
            <AddressPart>DataSturcture</AddressPart>
            <Chevron size={13} w={1.6} />
            <AddressPart>Dijkstra</AddressPart>
            <Chevron size={13} w={1.6} />
            <AddressPart>Dijkstra</AddressPart>
            <Chevron size={13} w={1.6} />
          </AddressBox>
          <SearchBox>
            <SearchText><T>Dijkstra 검색</T></SearchText>
            <Search />
          </SearchBox>
        </NavBar>

        <CommandBar>
          <CommandGroup $width={176}>
            <IconPlusCircle />
            <CommandLabel $gap={15}><T>새로 만들기</T></CommandLabel>
            <Caret $gap={11}><SmallCaret /></Caret>
          </CommandGroup>
          <CommandDivider $margin="0 3px 0 1px" />
          <CommandIcon><IconCut /></CommandIcon>
          <CommandIcon><IconCopy /></CommandIcon>
          <CommandIcon><IconPaste /></CommandIcon>
          <CommandIcon><IconRename /></CommandIcon>
          <CommandIcon><IconShare /></CommandIcon>
          <CommandIcon><IconTrash /></CommandIcon>
          <CommandDivider $margin="0 24px 0 3px" />
          <CommandGroup $width={133}>
            <IconSort />
            <CommandLabel $gap={11}><T>정렬</T></CommandLabel>
            <Caret $gap={10}><SmallCaret /></Caret>
          </CommandGroup>
          <CommandGroup $width={137}>
            <IconLines />
            <CommandLabel $gap={10}><T>보기</T></CommandLabel>
            <Caret $gap={11}><SmallCaret /></Caret>
          </CommandGroup>
          <CommandGroup $width={98}>
            <TripleDot gap={4} r={2} />
          </CommandGroup>
          <DetailsToggle>
            <IconDetails />
            <CommandLabel $gap={14}><T>세부 정보</T></CommandLabel>
          </DetailsToggle>
        </CommandBar>

        <Body>
          <Sidebar>
            <SideRow label="홈" icon={<Home />} bare />
            <SideRow label="갤러리" icon={<Gallery />} bare />
            <SidebarRule />
            {quick.map(([label, icon]) => (
              <SideRow key={label} label={label} icon={icon} bare pin />
            ))}
            <SidebarRule />
            {drives.map((d) => (
              <SideRow key={d.label} {...d} />
            ))}
          </Sidebar>

          <Content>
            <HeaderRow>
              <HeaderCell $first $pad={38}>
                <Checkbox />
                <T>이름</T>
                <SortCaret>
                  <svg width="12" height="7" viewBox="0 0 12 7" fill="none" stroke="#777" strokeWidth="1">
                    <path d="M.7 6.300 6 1l5.300 5.300" />
                  </svg>
                </SortCaret>
              </HeaderCell>
              <HeaderCell $pad={9}><T>수정한 날짜</T></HeaderCell>
              <HeaderCell $pad={9}><T>유형</T></HeaderCell>
              <HeaderCell $pad={9}><T>크기</T></HeaderCell>
            </HeaderRow>
            <Rows>
              {files.map(([name, date, type, size, kind]) => (
                <FileRow key={name}>
                  <NameCell>
                    <FileIconSlot $folder={kind === "folder"}>
                      {kind === "folder" ? <Folder /> : kind === "text" ? <TextFileIcon /> : <FileIcon />}
                    </FileIconSlot>
                    <FileName>{name}</FileName>
                  </NameCell>
                  <MetaCell $size={18.2} $ko={18.6} $lift={5}><T>{date}</T></MetaCell>
                  <MetaCell $size={17.6} $ko={19.2} $lift={5}><T>{type}</T></MetaCell>
                  <SizeCell>{size}</SizeCell>
                </FileRow>
              ))}
            </Rows>
            <ScrollTrack><ScrollThumb /></ScrollTrack>
          </Content>
        </Body>

        <StatusBar>
          <T>26개 항목</T>
          <StatusDivider />
          <ViewButtons>
            <ViewButton $active>
              <svg width="18" height="16" viewBox="0 0 18 16" stroke="#444" strokeWidth="1">
                <path d="M0 1h18M0 8h18M0 15h18" />
              </svg>
            </ViewButton>
            <ViewButton>
              <svg width="18" height="18" viewBox="0 0 18 18" fill="none" stroke="#444" strokeWidth="1">
                <rect x=".5" y=".5" width="17" height="13" rx="1.500" />
                <path d="M0 17.500h18" />
              </svg>
            </ViewButton>
          </ViewButtons>
        </StatusBar>
      </Window>

      <Taskbar>
        <TaskButton $active $top={13}>
          <ExplorerIcon />
          <TaskIndicator $active />
        </TaskButton>
        <TaskButton $top={11}>
          <EdgeIcon />
          <TaskIndicator />
        </TaskButton>
        <Tray>
          <TraySlot $width={48}><TrayCaret /></TraySlot>
          <TraySlot $width={48}><TrayMybox /></TraySlot>
          <TraySlot $width={48}><TrayPen /></TraySlot>
          <TraySlot $width={48}><TrayKeyboard /></TraySlot>
          <TraySlot $width={48}><TrayLetter>A</TrayLetter></TraySlot>
          <TraySlot $width={42} $nudge={6}><TrayNet /></TraySlot>
          <TraySlot $width={36}><TrayVolume /></TraySlot>
          <TraySlot $width={42}><TrayBattery /></TraySlot>
          <Clock>
            <div><T>오전 8:36</T></div>
            <div>2026-04-06</div>
          </Clock>
        </Tray>
      </Taskbar>

      <Menu>
        {menuGroups.map((group, i) => (
          <React.Fragment key={i}>
            {i > 0 && <MenuRule />}
            {group.map((item) => (
              <MenuItem key={item.label}>
                <MenuIcon>{item.icon}</MenuIcon>
                <MenuLabel><T>{item.label}</T></MenuLabel>
                {item.sub && <MenuChevron><Chevron size={16} color="#666" w={1.1} /></MenuChevron>}
                {item.key && <Shortcut>{item.key}</Shortcut>}
              </MenuItem>
            ))}
          </React.Fragment>
        ))}
      </Menu>
    </Page>
  )
}
